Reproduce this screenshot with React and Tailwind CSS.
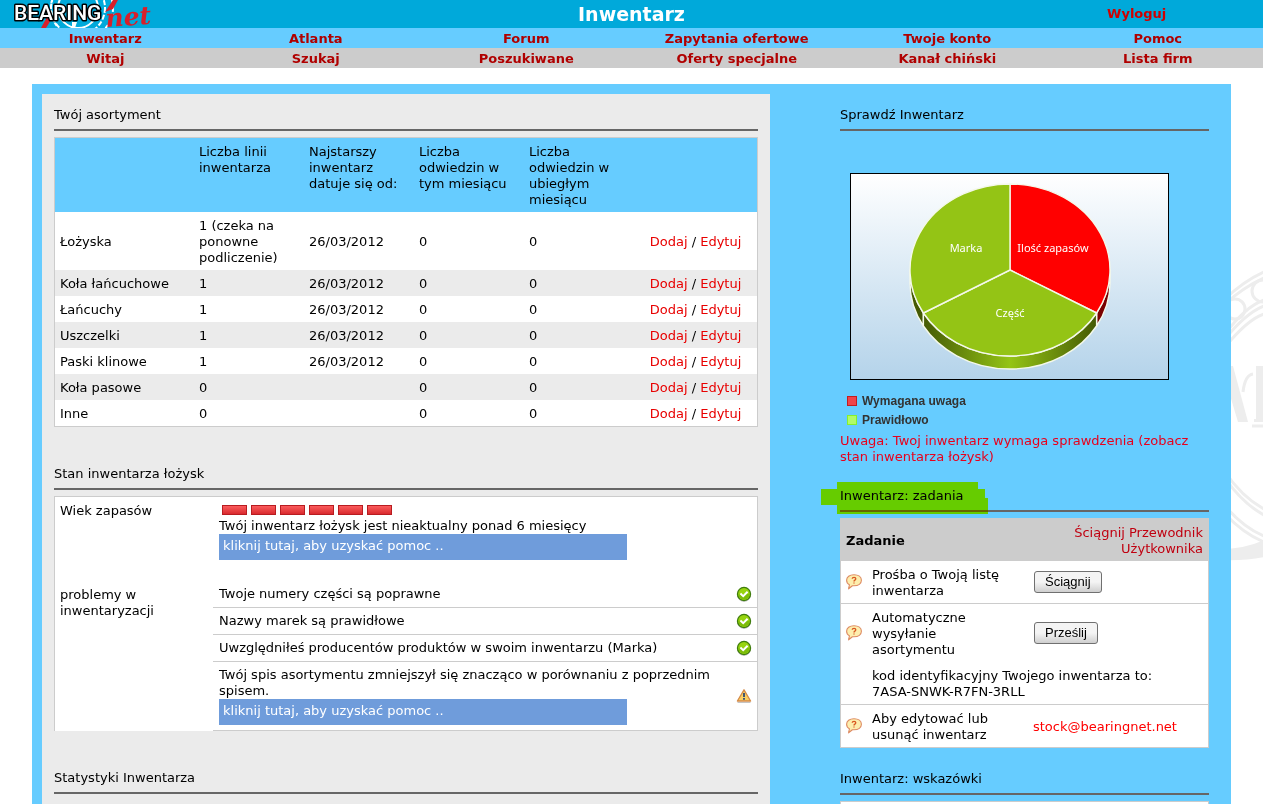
import React from 'react';

const topLinks = ['Inwentarz', 'Atlanta', 'Forum', 'Zapytania ofertowe', 'Twoje konto', 'Pomoc'];
const subLinks = ['Witaj', 'Szukaj', 'Poszukiwane', 'Oferty specjalne', 'Kanał chiński', 'Lista firm'];

const stock = [
  { name: 'Łożyska', lines: '1 (czeka na ponowne podliczenie)', date: '26/03/2012' },
  { name: 'Koła łańcuchowe', lines: '1', date: '26/03/2012' },
  { name: 'Łańcuchy', lines: '1', date: '26/03/2012' },
  { name: 'Uszczelki', lines: '1', date: '26/03/2012' },
  { name: 'Paski klinowe', lines: '1', date: '26/03/2012' },
  { name: 'Koła pasowe', lines: '0', date: '' },
  { name: 'Inne', lines: '0', date: '' },
];

const checks = [
  'Twoje numery części są poprawne',
  'Nazwy marek są prawidłowe',
  'Uwzględniłeś producentów produktów w swoim inwentarzu (Marka)',
];

function Logo() {
  return (
    <svg className="ml-3 block h-7 w-[150px] overflow-visible" viewBox="12 0 150 28" role="img" aria-label="Bearing net">
      <clipPath id="header-edge">
        <rect x="0" y="0" width="180" height="28" />
      </clipPath>
      <g clipPath="url(#header-edge)">
        <g fill="none" stroke="#fff">
          <circle cx="78" cy="8" r="27" strokeWidth="2" strokeDasharray="5 2" />
          <circle cx="78" cy="8" r="20" strokeWidth="2" />
          <circle cx="82" cy="8" r="31" strokeWidth="2" strokeDasharray="4 2" />
        </g>
        <path d="M72 22 H77 L75 28 H72 Z" fill="#fff" />
        <path d="M41 28 L47 17 L51 20 L46 28 Z" fill="#d81f2a" />
        <path d="M113 0 L118 0 L113 9 L105 12 Z" fill="#d81f2a" />
      </g>
      <text
        x="106"
        y="27"
        transform="rotate(-4 106 27)"
        className="fill-[#d81f2a] font-['DejaVu_Serif',serif] text-[25px] font-bold italic"
      >
        net
      </text>
      <text
        x="14"
        y="20"
        className="fill-white stroke-black font-[Roboto,sans-serif] text-[21px] font-medium [paint-order:stroke] [stroke-linejoin:round] [stroke-width:3px]"
      >
        BEARING
      </text>
    </svg>
  );
}

// Faint bearing behind the page
function Watermark() {
  return (
    <svg
      className="pointer-events-none absolute top-[240px] right-px h-[340px] w-[84px]"
      viewBox="1179 240 84 340"
      aria-hidden="true"
    >
      <g fill="none" stroke="#ededed" strokeWidth="3">
        <path d="M1225 299 Q1244 281 1264 272" />
        <path d="M1225 304 Q1244 287 1264 278" />
        <circle cx="1235" cy="309" r="10" />
        <circle cx="1263" cy="291" r="11" />
        <path d="M1225 334 Q1246 306 1264 300" />
        <path d="M1225 339 Q1246 313 1264 306" />
        <path d="M1225 347 Q1248 319 1264 314" />
        <path d="M1225 472 Q1242 497 1264 509" />
        <path d="M1225 478 Q1242 503 1264 515" />
        <path d="M1225 506 Q1244 528 1264 536" />
        <path d="M1225 514 Q1244 534 1264 542" />
        <path d="M1243 392 Q1245 375 1253 374" />
        <path d="M1252 426 H1264" />
      </g>
      <g fill="#ededed">
        <path d="M1229 366 H1233 L1248 422 H1238 L1229 392 Z" />
        <path d="M1256 366 H1264 V422 H1254 V419 H1256 Z" />
        <path d="M1220 549 Q1245 549 1264 540 V557 Q1245 561 1220 560 Z" />
      </g>
    </svg>
  );
}

function OkIcon() {
  return (
    <svg className="h-4 w-4" viewBox="0 0 16 16" role="img" aria-label="OK">
      <circle cx="8" cy="8.8" r="7" fill="#b5b5b5" />
      <circle cx="8" cy="8" r="7.2" fill="#3f7d0c" />
      <circle cx="8" cy="8" r="5.9" fill="#97d40f" />
      <path d="M2.2 8 A5.8 5.8 0 0 0 13.8 8 Z" fill="#7dbd09" />
      <path d="M4.4 7.6 L7.2 10.2 L11.6 5.8" fill="none" stroke="#fff" strokeWidth="2" />
    </svg>
  );
}

function WarningIcon() {
  return (
    <svg className="h-4 w-4" viewBox="0 0 16 16" role="img" aria-label="Uwaga">
      <path d="M1.5 14.5 H14.5" stroke="#c4c4c4" strokeWidth="1" />
      <path
        d="M8 1.8 L14.6 13 H1.4 Z"
        fill="#fbcf62"
        stroke="#d48a48"
        strokeWidth="1.3"
        strokeLinejoin="round"
      />
      <path d="M8 5 V9 M8 10 V11.8" stroke="#2f4a78" strokeWidth="1.8" />
    </svg>
  );
}

function HelpIcon() {
  return (
    <svg className="h-4 w-4" viewBox="0 0 16 16" role="img" aria-label="Pomoc">
      <path
        d="M8 .8 C12.4 .8 15.4 3 15.4 6.3 C15.4 9.6 12.4 11.8 8 11.8 L6.4 11.7 L2.6 14.8 L3.4 10.8 C1.6 9.8 .6 8.2 .6 6.3 C.6 3 3.6 .8 8 .8 Z"
        fill="#fdeeae"
        stroke="#dd8a62"
        strokeWidth="1.1"
        strokeLinejoin="round"
      />
      <path
        d="M6.2 4.8 C6.3 3 9.8 3 9.8 4.8 C9.8 6.2 8 6.1 8 7.4 M8 8.4 V9.6"
        fill="none"
        stroke="#d9571f"
        strokeWidth="1.3"
      />
    </svg>
  );
}

function PieChart() {
  const label = "fill-white font-['Noto_Sans',sans-serif] text-[11px]";
  return (
    <svg className="mt-[42px] ml-[10px] block h-[207px] w-[319px]" viewBox="0 0 319 207" role="img" aria-label="Stan inwentarza">
      <defs>
        <linearGradient id="sky" x1="0" y1="0" x2="0" y2="1">
          <stop offset="0" stopColor="#ffffff" />
          <stop offset="1" stopColor="#b4d3ea" />
        </linearGradient>
        <linearGradient id="rim" x1="0" y1="0" x2="1" y2="0">
          <stop offset="0" stopColor="#455a04" />
          <stop offset="0.5" stopColor="#94c415" />
          <stop offset="1" stopColor="#455a04" />
        </linearGradient>
      </defs>
      <rect x="0.5" y="0.5" width="318" height="206" fill="url(#sky)" stroke="#000" />
      <g stroke="#f4f8ea" strokeWidth="1.4" strokeLinejoin="round">
        <path d="M60 97 A100 86 0 0 0 73.4 140 V153 A100 86 0 0 1 60 110 Z" fill="#455a04" />
        <path d="M260 97 A100 86 0 0 1 246.6 140 V153 A100 86 0 0 0 260 110 Z" fill="#7a0000" />
        <path d="M73.4 140 A100 86 0 0 0 246.6 140 V153 A100 86 0 0 1 73.4 153 Z" fill="url(#rim)" />
        <path d="M160 97 L160 11 A100 86 0 0 1 246.6 140 Z" fill="#ff0000" />
        <path d="M160 97 L246.6 140 A100 86 0 0 1 73.4 140 Z" fill="#94c415" />
        <path d="M160 97 L73.4 140 A100 86 0 0 1 160 11 Z" fill="#94c415" />
      </g>
      <text x="116" y="79" textAnchor="middle" className={label}>Marka</text>
      <text x="203" y="79" textAnchor="middle" className={label}>Ilość zapasów</text>
      <text x="160" y="144" textAnchor="middle" className={label}>Część</text>
    </svg>
  );
}

function SectionTitle({ children }) {
  return <h2 className="mb-[6px] border-b-2 border-[#666] pt-[13px] pb-[6px]">{children}</h2>;
}

function NavRow({ links, className }) {
  return (
    <nav className={`grid h-5 grid-cols-6 items-end pb-px text-center font-bold text-[#b00000] ${className}`}>
      {links.map((link) => (
        <a key={link} href="#">
          {link}
        </a>
      ))}
    </nav>
  );
}

function HelpLink() {
  return (
    <a href="#" className="block h-[26px] w-[408px] bg-[#6f9cdb] px-1 py-1 text-white">
      kliknij tutaj, aby uzyskać pomoc ..
    </a>
  );
}

function ActionButton({ children }) {
  return (
    <button
      type="button"
      className="h-[22px] rounded-[3px] border border-[#707070] bg-linear-to-b from-[#f4f4f4] from-50% to-[#cfcfcf] to-100% px-[10px] font-['Liberation_Sans',sans-serif] leading-5"
    >
      {children}
    </button>
  );
}

function StockTable() {
  return (
    <table className="w-full table-fixed border-separate border-spacing-0 border border-[#ccc] bg-white">
      <colgroup>
        <col className="w-[139px]" />
        <col className="w-[110px]" />
        <col className="w-[110px]" />
        <col className="w-[110px]" />
        <col className="w-[110px]" />
        <col />
      </colgroup>
      <thead className="bg-[#66ccff] text-left align-top">
        <tr>
          <td className="px-[5px] pt-[6px] pb-1"></td>
          <th className="px-[5px] pt-[6px] pb-1 font-normal">Liczba linii inwentarza</th>
          <th className="px-[5px] pt-[6px] pb-1 font-normal">Najstarszy inwentarz datuje się od:</th>
          <th className="px-[5px] pt-[6px] pb-1 font-normal">Liczba odwiedzin w tym miesiącu</th>
          <th className="px-[5px] pt-[6px] pb-1 font-normal">Liczba odwiedzin w ubiegłym miesiącu</th>
          <td className="px-[5px] pt-[6px] pb-1"></td>
        </tr>
      </thead>
      <tbody>
        {stock.map((row) => (
          <tr key={row.name} className="even:bg-[#ebebeb]">
            <td className="px-[5px] pt-[6px] pb-1">{row.name}</td>
            <td className="px-[5px] pt-[6px] pb-1">{row.lines}</td>
            <td className="px-[5px] pt-[6px] pb-1">{row.date}</td>
            <td className="px-[5px] pt-[6px] pb-1">0</td>
            <td className="px-[5px] pt-[6px] pb-1">0</td>
            <td className="px-[5px] pt-[6px] pb-1 text-center">
              <a href="#" className="text-[#e80000]">Dodaj</a> / <a href="#" className="text-[#e80000]">Edytuj</a>
            </td>
          </tr>
        ))}
      </tbody>
    </table>
  );
}

function StockState() {
  return (
    <div className="border-t border-l border-[#ccc] bg-white">
      <div className="flex border-r border-[#ccc] pb-4">
        <div className="w-[158px] shrink-0 px-[5px] pt-[6px] pb-1">Wiek zapasów</div>
        <div className="grow px-[6px] py-[5px]">
          <div className="flex h-4 items-center gap-1 px-[3px]">
            {[1, 2, 3, 4, 5, 6].map((n) => (
              <span key={n} className="h-[10px] w-[25px] border border-[#b81c20] bg-linear-to-b from-[#fb5a5c] to-[#d9282e]" />
            ))}
          </div>
          <p>Twój inwentarz łożysk jest nieaktualny ponad 6 miesięcy</p>
          <HelpLink />
        </div>
      </div>
      <div className="flex border-r border-[#ccc]">
        <div className="w-[158px] shrink-0 px-[5px] pt-[6px] pb-1">problemy w inwentaryzacji</div>
        <ul className="grow">
          {checks.map((check) => (
            <li key={check} className="flex items-center justify-between border-b border-[#ccc] py-[5px] pr-[5px] pl-[6px]">
              {check}
              <OkIcon />
            </li>
          ))}
          <li className="flex items-center justify-between border-b border-[#ccc] py-[5px] pr-[5px] pl-[6px]">
            <div className="max-w-[510px]">
              <p>Twój spis asortymentu zmniejszył się znacząco w porównaniu z poprzednim spisem.</p>
              <HelpLink />
            </div>
            <WarningIcon />
          </li>
        </ul>
      </div>
    </div>
  );
}

function TasksTable() {
  return (
    <table className="w-full table-fixed border-separate border-spacing-0 border border-[#ccc] bg-white">
      <colgroup>
        <col className="w-[26px]" />
        <col className="w-[161px]" />
        <col />
      </colgroup>
      <thead className="bg-[#ccc]">
        <tr>
          <th colSpan={2} className="px-[5px] pt-[6px] pb-1 text-left">Zadanie</th>
          <td className="px-[5px] pt-[6px] pb-1 text-right">
            <a href="#" className="text-[#c00010]">Ściągnij Przewodnik Użytkownika</a>
          </td>
        </tr>
      </thead>
      <tbody>
        <tr>
          <td className="border-b border-[#ccc] p-[5px]"><HelpIcon /></td>
          <td className="border-b border-[#ccc] px-[5px] pt-[6px] pb-1">Prośba o Twoją listę inwentarza</td>
          <td className="border-b border-[#ccc] px-[6px]"><ActionButton>Ściągnij</ActionButton></td>
        </tr>
        <tr>
          <td className="p-[5px]"><HelpIcon /></td>
          <td className="px-[5px] pt-[6px] pb-1">Automatyczne wysyłanie asortymentu</td>
          <td className="px-[6px]"><ActionButton>Prześlij</ActionButton></td>
        </tr>
        <tr>
          <td className="border-b border-[#ccc]"></td>
          <td colSpan={2} className="border-b border-[#ccc] px-[5px] pt-[6px] pb-1">
            kod identyfikacyjny Twojego inwentarza to:
            <br />
            7ASA-SNWK-R7FN-3RLL
          </td>
        </tr>
        <tr>
          <td className="p-[5px]"><HelpIcon /></td>
          <td className="px-[5px] pt-[6px] pb-1">Aby edytować lub usunąć inwentarz</td>
          <td className="px-[5px] pt-[6px] pb-1">
            <a href="#" className="text-[#f00]">stock@bearingnet.net</a>
          </td>
        </tr>
      </tbody>
    </table>
  );
}

function App() {
  return (
    <div className="relative flex min-h-screen flex-col bg-white pr-px font-['DejaVu_Sans',sans-serif] text-[13px] leading-4 text-black">
      <Watermark />

      {/* Header */}
      <header className="grid h-7 grid-cols-[1fr_3fr_1fr] items-center bg-[#00a9da] text-center font-bold">
        <Logo />
        <h1 className="text-[19px] text-white">Inwentarz</h1>
        <a href="#" className="text-[#d00000]">Wyloguj</a>
      </header>
      <NavRow links={topLinks} className="bg-[#66ccff]" />
      <NavRow links={subLinks} className="bg-[#ccc]" />

      {/* Page body */}
      <main className="relative mx-8 mt-4 flex grow gap-[70px] bg-[#66ccff] pt-[10px] pr-[22px] pl-[10px]">
        <div className="flex grow flex-col gap-[26px] bg-[#ebebeb] px-3">
          <section>
            <SectionTitle>Twój asortyment</SectionTitle>
            <StockTable />
          </section>
          <section>
            <SectionTitle>Stan inwentarza łożysk</SectionTitle>
            <StockState />
          </section>
          <section>
            <SectionTitle>Statystyki Inwentarza</SectionTitle>
          </section>
        </div>

        <aside className="flex w-[369px] shrink-0 flex-col gap-[10px]">
          <section>
            <SectionTitle>Sprawdź Inwentarz</SectionTitle>
            <PieChart />
            <ul className="mt-[11px] px-[7px] font-['Liberation_Sans',sans-serif] text-[12px] font-bold text-[#333]">
              <li className="flex h-[19px] items-center gap-[5px]">
                <span className="h-[10px] w-[10px] border border-[#c41c20] bg-[#f0444a]" />
                Wymagana uwaga
              </li>
              <li className="flex h-[19px] items-center gap-[5px]">
                <span className="h-[10px] w-[10px] border border-[#86f02c] bg-[#b0fb68]" />
                Prawidłowo
              </li>
            </ul>
            <p className="mt-1 text-[#e8001c]">
              Uwaga: Twoj inwentarz wymaga sprawdzenia (zobacz stan inwentarza łożysk)
            </p>
          </section>

          <section className="relative">
            <SectionTitle>Inwentarz: zadania</SectionTitle>
            <TasksTable />
            {/* Marker stroke over the title */}
            <svg
              className="pointer-events-none absolute top-[7px] -left-[19px] h-8 w-[167px] mix-blend-multiply"
              viewBox="0 0 167 32"
              aria-hidden="true"
            >
              <path d="M0 7 H16 V0 H157 V7 H164 V16 H167 V32 H16 V23 H0 Z" fill="#ffff00" />
            </svg>
          </section>

          <section className="flex grow flex-col">
            <SectionTitle>Inwentarz: wskazówki</SectionTitle>
            <div className="grow border border-b-0 border-[#ccc] bg-white" />
          </section>
        </aside>
      </main>
    </div>
  );
}

export default App;
